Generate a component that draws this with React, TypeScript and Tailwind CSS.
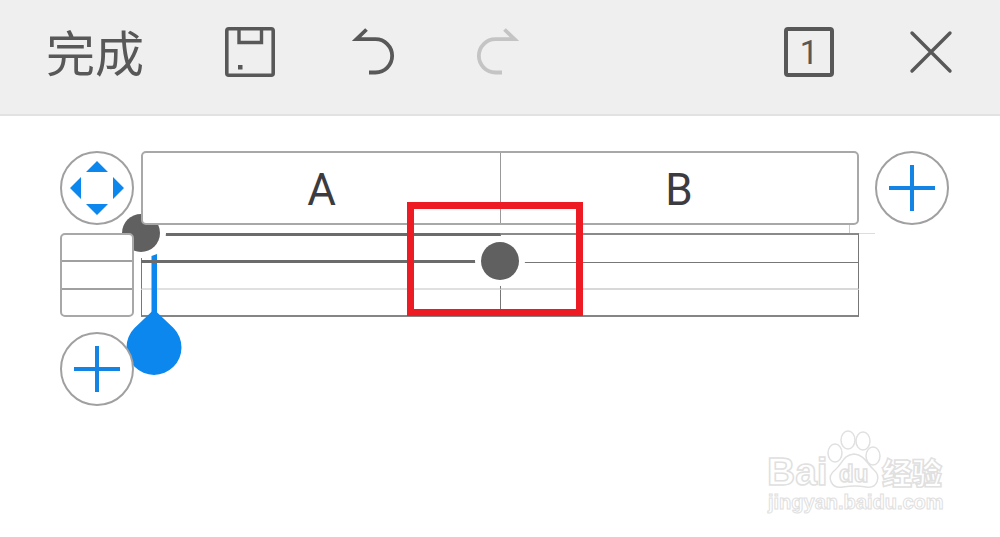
import type { ReactNode } from "react";

const columns = ["A", "B"];
const rows = [1, 2, 3];

const cellBorders = [
  [
    "border-t-[3px] border-t-[#6b6b6b] border-l border-l-[#777] border-b-[3px] border-b-[#6b6b6b]",
    "border-t-2 border-t-[#8a8a8a] border-x border-x-[#777] border-b border-b-[#777]",
  ],
  [
    "border-l border-l-[#777] border-b-2 border-b-[#e0e0e0]",
    "border-x border-x-[#777] border-b-2 border-b-[#d8d8d8]",
  ],
  [
    "border-l border-l-[#777] border-b-2 border-b-[#858585]",
    "border-x border-x-[#777] border-b-2 border-b-[#858585]",
  ],
];

const SaveIcon = () => (
  <svg className="size-[50px]" viewBox="0 0 50 50" fill="none" stroke="#585858">
    <rect x="1.8" y="1.8" width="46.4" height="46.4" rx="2" strokeWidth="3.6" />
    <path d="M14 3V15.500H36.500V3" strokeWidth="3.400" />
    <rect x="13" y="38" width="4.500" height="4.500" fill="#585858" stroke="none" />
  </svg>
);

const UndoIcon = ({ color }: { color: string }) => (
  <svg className="h-[50px] w-[46px]" viewBox="0 0 46 50" fill="none" stroke={color} strokeWidth="3.8">
    <path d="M16.500 2.500L6.500 12.200H25.500A16.600 16.600 0 0 1 25.500 45.500H19" />
  </svg>
);

const CloseIcon = () => (
  <svg className="size-[44px]" viewBox="0 0 44 44" fill="none" stroke="#585858" strokeWidth="3.4" strokeLinecap="round">
    <path d="M3 3L41 41M41 3L3 41" />
  </svg>
);

const MoveIcon = () => (
  <svg className="size-[54px]" viewBox="0 0 54 54" fill="#0b87ee">
    <path d="M27 0L38 11H16ZM27 54L38 43H16ZM0 27L11 16V38ZM54 27L43 16V38Z" />
  </svg>
);

const PlusIcon = () => (
  <svg className="size-[46px]" viewBox="0 0 46 46" stroke="#1484e4" strokeWidth="4">
    <path d="M23 0V46M0 23H46" />
  </svg>
);

const RoundButton = ({ label, children }: { label: string; children: ReactNode }) => (
  <button
    aria-label={label}
    className="relative z-10 flex size-[74px] items-center justify-center rounded-full border-2 border-[#a0a0a0] bg-white"
  >
    {children}
  </button>
);

const Toolbar = () => (
  <header className="flex h-[116px] items-center border-b-2 border-[#e2e2e2] bg-[#efefef] pr-[47px] pb-[10px] pl-[46px] text-[#585858]">
    <button className="pb-[3px] text-[49px] leading-[56px]">完成</button>
    <button aria-label="Save" className="ml-[81px]">
      <SaveIcon />
    </button>
    <button aria-label="Undo" className="ml-[75px]">
      <UndoIcon color="#585858" />
    </button>
    <button aria-label="Redo" disabled className="ml-[79px] -scale-x-100">
      <UndoIcon color="#c4c4c4" />
    </button>
    <button
      aria-label="Pages"
      className="ml-auto flex size-[50px] items-center justify-center rounded-[4px] border-4 border-[#585858] font-[Roboto] text-[33px] leading-none"
    >
      1
    </button>
    <button aria-label="Close" className="ml-[75px]">
      <CloseIcon />
    </button>
  </header>
);

// white ring cuts the grid lines around the dot
const Handle = ({ className }: { className: string }) => (
  <span className={`absolute size-[50px] rounded-full border-6 border-white bg-white ${className}`}>
    <span className="block size-[38px] rounded-full bg-[#606060]" />
  </span>
);

const Caret = () => (
  <svg className="absolute top-[21px] -left-[15px] h-[122px] w-[56px]" viewBox="0 0 56 122" fill="#0b87ee">
    <path d="M25.500 2L31 0V60H25.500Z" />
    <path d="M28 55.500L47.500 74A27.500 27.500 0 1 1 8.500 74Z" />
    <path d="M15 7.500H50" stroke="#6b6b6b" strokeWidth="3" />
  </svg>
);

const Sheet = () => (
  <div className="relative">
    <table className="w-full table-fixed border-separate border-spacing-0">
      <tbody>
        {rows.map((row, r) => (
          <tr key={row}>
            {columns.map((col, c) => (
              <td key={col} className={`p-0 ${r === 0 ? "h-[30px]" : "h-[27px]"} ${cellBorders[r][c]}`} />
            ))}
          </tr>
        ))}
      </tbody>
    </table>
    <Handle className="-top-[25px] -left-[25px]" />
    <Handle className="top-[3px] left-1/2 -translate-x-1/2" />
    <Caret />
    <div className="absolute -top-[31px] left-1/2 z-20 h-[114px] w-[176px] -translate-x-[93px] border-7 border-[#ed1c24]" />
  </div>
);

const Watermark = () => (
  <div className="absolute right-[48px] bottom-[20px]">
    <svg
      className="h-[88px] w-[186px]"
      viewBox="0 0 186 88"
      fill="#fff"
      stroke="#e0e0e0"
      strokeWidth="1.500"
      fontFamily="Liberation Sans"
      fontWeight="bold"
    >
      <text x="1" y="56" fontSize="39">Bai</text>
      <ellipse cx="69" cy="24" rx="7" ry="9" />
      <ellipse cx="82" cy="11" rx="7" ry="9" />
      <ellipse cx="97" cy="12" rx="7" ry="9" />
      <ellipse cx="107" cy="27" rx="7" ry="9" />
      <path d="M88 25C77 26 77 34 69 41C60 48 65 60 77 58C84 57 94 57 100 58C112 60 115 47 108 41C101 35 99 26 88 25Z" />
      <text x="73" y="53" fontSize="24">du</text>
      <text x="116" y="55" fontSize="30" fontFamily="Noto Sans CJK SC" fontWeight="900">
        经验
      </text>
      <text x="2" y="80" fontSize="20" strokeWidth="1">jingyan.baidu.com</text>
    </svg>
  </div>
);

export default function App() {
  return (
    <div className="relative min-h-screen overflow-hidden bg-white font-['Noto_Sans_CJK_SC',sans-serif]">
      <Toolbar />
      <main className="grid grid-cols-[74px_1fr_74px] pt-[35px] pr-[51px] pl-[60px]">
        <RoundButton label="Move table">
          <MoveIcon />
        </RoundButton>
        <div className="relative z-10 mr-[16px] ml-[7px] grid h-[74px] grid-cols-2 rounded-[5px] border-2 border-[#a8a8a8] bg-white font-[Roboto] text-[44px] text-[#3c3c40]">
          {columns.map((col) => (
            <button key={col} className="border-[#999] pt-[3px] not-first:border-l">
              {col}
            </button>
          ))}
        </div>
        <RoundButton label="Add column">
          <PlusIcon />
        </RoundButton>

        <div className="relative z-10 mt-[8px] flex h-[84px] flex-col rounded-[5px] border-2 border-[#a8a8a8] bg-white">
          {rows.map((row) => (
            <button
              key={row}
              aria-label={`Row ${row}`}
              className="flex-1 border-[#a0a0a0] not-first:border-t-2"
            />
          ))}
        </div>
        <div className="mt-[8px] mr-[16px] ml-[7px]">
          <Sheet />
        </div>
        <div className="relative">
          <span className="absolute top-0 -left-[26px] h-[8px] w-px bg-[#ccc]" />
          <span className="absolute top-[8px] -left-[16px] h-px w-[16px] bg-[#ddd]" />
        </div>

        <div className="mt-[15px]">
          <RoundButton label="Add row">
            <PlusIcon />
          </RoundButton>
        </div>
      </main>
      <Watermark />
    </div>
  );
}
